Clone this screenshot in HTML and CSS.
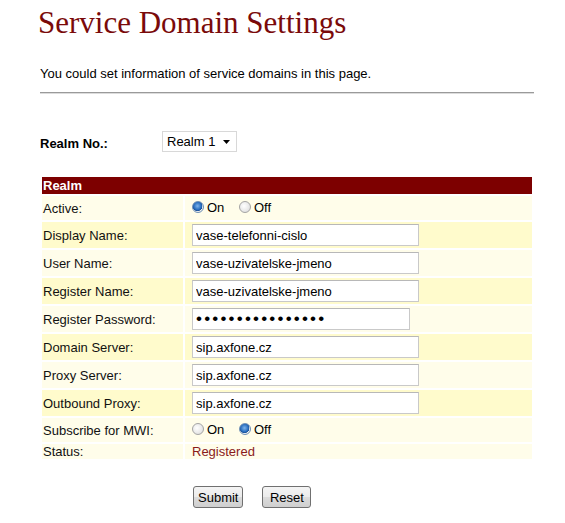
FILE: index.html
```html
<!DOCTYPE html>
<html>
<head>
<meta charset="utf-8">
<title>Service Domain Settings</title>
<link rel="stylesheet" href="styles.css">
</head>
<body>
<div class="page">
  <h1 class="title">Service Domain Settings</h1>
  <p class="intro">You could set information of service domains in this page.</p>
  <hr class="rule">

  <form class="form">
    <div class="realm-select-row">
      <label class="realm-label" for="realm">Realm No.:</label>
      <span class="select-wrap">
        <select id="realm" class="select"><option>Realm 1</option><option>Realm 2</option></select>
        <svg class="select-arrow" width="8" height="4" viewBox="0 0 8 4"><path d="M0 0h7L3.5 4z" fill="#000"/></svg>
      </span>
    </div>

    <table class="grid">
      <colgroup><col class="col-label"><col class="col-value"></colgroup>
      <thead>
        <tr><th colspan="2" class="head">Realm</th></tr>
      </thead>
      <tbody>
        <tr class="light radio-row">
          <td class="label">Active:</td>
          <td class="value">
            <label class="radio"><input type="radio" name="active" checked><span>On</span></label>
            <label class="radio"><input type="radio" name="active"><span>Off</span></label>
          </td>
        </tr>
        <tr class="dark">
          <td class="label">Display Name:</td>
          <td class="value"><input class="field" type="text" value="vase-telefonni-cislo"></td>
        </tr>
        <tr class="light">
          <td class="label">User Name:</td>
          <td class="value"><input class="field" type="text" value="vase-uzivatelske-jmeno"></td>
        </tr>
        <tr class="dark">
          <td class="label">Register Name:</td>
          <td class="value"><input class="field" type="text" value="vase-uzivatelske-jmeno"></td>
        </tr>
        <tr class="light">
          <td class="label">Register Password:</td>
          <td class="value"><input class="field pw" type="password" value="abcdefghijklmnop"></td>
        </tr>
        <tr class="dark">
          <td class="label">Domain Server:</td>
          <td class="value"><input class="field" type="text" value="sip.axfone.cz"></td>
        </tr>
        <tr class="light">
          <td class="label">Proxy Server:</td>
          <td class="value"><input class="field" type="text" value="sip.axfone.cz"></td>
        </tr>
        <tr class="dark">
          <td class="label">Outbound Proxy:</td>
          <td class="value"><input class="field" type="text" value="sip.axfone.cz"></td>
        </tr>
        <tr class="light radio-row">
          <td class="label">Subscribe for MWI:</td>
          <td class="value">
            <label class="radio"><input type="radio" name="mwi"><span>On</span></label>
            <label class="radio"><input type="radio" name="mwi" checked><span>Off</span></label>
          </td>
        </tr>
        <tr class="light status-row">
          <td class="label">Status:</td>
          <td class="value status">Registered</td>
        </tr>
      </tbody>
    </table>

    <div class="actions">
      <button type="submit" class="btn">Submit</button>
      <button type="reset" class="btn">Reset</button>
    </div>
  </form>
</div>
</body>
</html>
```

FILE: styles.css
```css
html, body {
  margin: 0;
  padding: 0;
  background: #ffffff;
}

.page {
  padding: 0 31px 0 40px;
  width: 494px;
  font-family: "Liberation Sans", Arial, sans-serif;
  font-size: 13px;
  color: #000;
}

.title {
  margin: 5px 0 0 -2px;
  font-family: "Liberation Serif", "Times New Roman", serif;
  font-weight: normal;
  font-size: 31px;
  line-height: 35px;
  color: #7a0a0a;
}

.intro {
  margin: 26px 0 0 0;
  line-height: 16px;
}

.rule {
  margin: 10px 0 0 0;
  height: 0;
  border: 0;
  border-top: 1px solid #9a9a9a;
  border-bottom: 1px solid #dcdcdc;
}

.form {
  margin: 0;
}

.realm-select-row {
  display: flex;
  align-items: center;
  margin-top: 37px;
  height: 21px;
}

.realm-label {
  width: 122px;
  font-weight: bold;
  padding-top: 4px;
}

.select-wrap {
  position: relative;
  display: inline-block;
}

.select {
  -webkit-appearance: none;
  appearance: none;
  width: 75px;
  height: 21px;
  margin: 0;
  padding: 0 0 0 4px;
  border: 1px solid #d8d8d8;
  border-radius: 0;
  background: #fff;
  font-family: "Liberation Sans", Arial, sans-serif;
  font-size: 13px;
  color: #000;
}

.select-arrow {
  position: absolute;
  right: 6px;
  top: 9px;
  pointer-events: none;
}

.grid {
  margin-top: 23px;
  width: 494px;
  border-collapse: separate;
  border-spacing: 2px;
  table-layout: fixed;
}

.col-label {
  width: 141px;
}

.head {
  background: #7d0000;
  color: #fff;
  font-weight: bold;
  text-align: left;
  height: 17px;
  padding: 0 0 0 1px;
  line-height: 17px;
  font-size: 13px;
}

.grid td {
  padding: 0;
  height: 26px;
  vertical-align: middle;
}

.grid .radio-row td {
  height: 24px;
}

.grid .status-row td {
  height: 15px;
}

.light td {
  background: #fffdea;
}

.dark td {
  background: #fffbcc;
}

.label {
  padding-left: 1px !important;
  color: #111;
}

.value {
  padding-left: 7px !important;
}

.field {
  box-sizing: border-box;
  width: 227px;
  height: 22px;
  margin: 0;
  padding: 0 0 0 3px;
  border: 1px solid #c9c9c9;
  border-top-color: #b8b8b8;
  background: #fff;
  font-family: "Liberation Sans", Arial, sans-serif;
  font-size: 13px;
  color: #000;
  vertical-align: middle;
}

.field.pw {
  width: 218px;
  font-size: 17px;
  letter-spacing: 2.2px;
  padding-left: 3px;
}

.radio {
  display: inline-flex;
  align-items: center;
  margin-right: 11px;
}

.radio input {
  -webkit-appearance: none;
  appearance: none;
  box-sizing: border-box;
  width: 12px;
  height: 12px;
  margin: 0 3px 0 0;
  border: 1px solid #a4a4a4;
  border-radius: 50%;
  background: radial-gradient(circle at 40% 40%, #ffffff 0%, #e4e4e4 70%, #cfcfcf 100%);
}

.radio input:checked {
  background:
    radial-gradient(circle at 45% 40%, #7fb4ea 0%, #2a6fc0 45%, #1a4f96 60%, transparent 62%),
    radial-gradient(circle, #ffffff 0%, #e6e6e6 100%);
  border-color: #6d8fb5;
}

.status {
  color: #8a1a1a;
}

.actions {
  display: flex;
  gap: 19px;
  margin: 25px 0 0 153px;
}

.btn {
  box-sizing: border-box;
  min-width: 49px;
  height: 22px;
  padding: 0 4px;
  border: 1px solid #707070;
  border-radius: 3px;
  background: linear-gradient(#f4f4f4 0%, #ebebeb 50%, #dcdcdc 51%, #cfcfcf 100%);
  font-family: "Liberation Sans", Arial, sans-serif;
  font-size: 13px;
  color: #000;
}
```
